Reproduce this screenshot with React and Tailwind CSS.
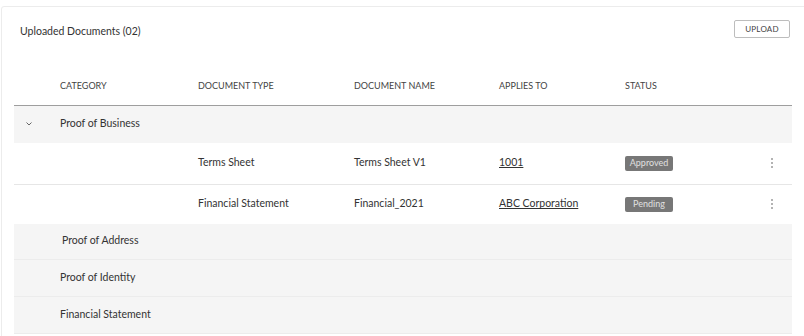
const columns = ['', 'CATEGORY', 'DOCUMENT TYPE', 'DOCUMENT NAME', 'APPLIES TO', 'STATUS', '']

const documents = [
  { type: 'Terms Sheet', name: 'Terms Sheet V1', appliesTo: '1001', status: 'Approved' },
  { type: 'Financial Statement', name: 'Financial_2021', appliesTo: 'ABC Corporation', status: 'Pending' }
]

const otherCategories = [
  { label: 'Proof of Address', h: 'h-[36px]', indent: 'pl-[2px]' },
  { label: 'Proof of Identity', h: 'h-[37px]', indent: '' },
  { label: 'Financial Statement', h: 'h-[37px]', indent: '' }
]

const grid = 'grid grid-cols-[46px_138px_156px_145px_126px_1fr_40px] items-center'

const Kebab = () => (
  <svg width="4" height="12" viewBox="0 0 4 12" fill="#9a9a9a">
    <circle cx="2" cy="2" r="1" />
    <circle cx="2" cy="6" r="1" />
    <circle cx="2" cy="10" r="1" />
  </svg>
)

const App = () => {
  return (
    <div className="w-[804px] h-[336px] bg-white overflow-hidden pt-[6px] pl-[1px] font-['Lato','Liberation_Sans',sans-serif] text-[#333] text-[10.5px]">
      <div className="w-[820px] h-[340px] border border-[#ececec] rounded-[3px] pl-[12px]">
        <div className="flex items-start justify-between w-[778px] pt-[13px]">
          <h2 className="pl-[6px] pt-[4px] text-[10.5px] text-[#333] font-normal">Uploaded Documents (02)</h2>
          <button className="mr-[2px] w-[56px] h-[18px] border border-[#bdbdbd] rounded-[2px] bg-white text-[8px] tracking-[0.2px] text-[#444]">
            UPLOAD
          </button>
        </div>

        <div className="w-[778px] mt-[26px]">
          <div className={`${grid} h-[40px] border-b border-[#9e9e9e] text-[9px] text-[#444]`}>
            {columns.map((c, i) => (
              <div key={i}>{c}</div>
            ))}
          </div>

          <div className={`${grid} h-[37px] bg-[#f5f5f5]`}>
            <div className="pl-[11px]">
              <svg width="8" height="6" viewBox="0 0 8 6" fill="none" stroke="#666" strokeWidth="1">
                <path d="M1.5 1.5 L4 4 L6.5 1.5" />
              </svg>
            </div>
            <div>Proof of Business</div>
          </div>

          {documents.map((doc, i) => (
            <div
              key={doc.name}
              className={`${grid} ${i === 0 ? 'h-[42px] border-b border-[#e6e6e6]' : 'h-[39px]'} bg-white`}
            >
              <div />
              <div />
              <div>{doc.type}</div>
              <div>{doc.name}</div>
              <div>
                <span className="underline underline-offset-1">{doc.appliesTo}</span>
              </div>
              <div>
                <span className="inline-flex items-center justify-center w-[48px] h-[15px] rounded-[2px] bg-[#777] text-[#e0e0e0] text-[9px]">
                  {doc.status}
                </span>
              </div>
              <div className="flex justify-center">
                <Kebab />
              </div>
            </div>
          ))}

          {otherCategories.map((cat) => (
            <div key={cat.label} className={`${grid} ${cat.h} bg-[#f5f5f5] border-b border-[#ececec]`}>
              <div />
              <div className={cat.indent}>{cat.label}</div>
            </div>
          ))}
        </div>
      </div>
    </div>
  )
}

export default App
